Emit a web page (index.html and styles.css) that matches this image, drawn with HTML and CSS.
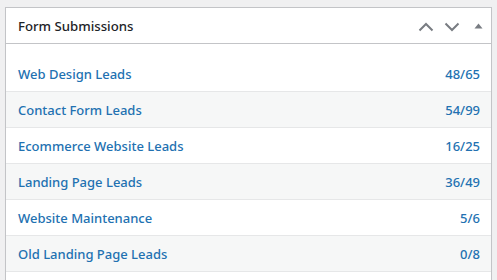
FILE: index.html
```html
<!DOCTYPE html>
<html>
<head>
<meta charset="utf-8">
<link rel="stylesheet" href="styles.css">
</head>
<body>
<div class="panel">
  <div class="header">
    <h2 class="title">Form Submissions</h2>
    <div class="actions">
      <svg class="chev" width="16" height="10" viewBox="0 0 16 10"><path d="M1.5 8.5 L8 2 L14.5 8.5" fill="none" stroke="#787c82" stroke-width="2"/></svg>
      <svg class="chev" width="16" height="10" viewBox="0 0 16 10"><path d="M1.5 1.5 L8 8 L14.5 1.5" fill="none" stroke="#787c82" stroke-width="2"/></svg>
      <svg class="tri" width="9" height="6" viewBox="0 0 9 6"><path d="M0.5 5.5 L4.5 0.5 L8.5 5.5 Z" fill="#787c82"/></svg>
    </div>
  </div>
  <ul class="list">
    <li class="row"><a class="name">Web Design Leads</a><a class="count">48/65</a></li>
    <li class="row alt"><a class="name">Contact Form Leads</a><a class="count">54/99</a></li>
    <li class="row"><a class="name">Ecommerce Website Leads</a><a class="count">16/25</a></li>
    <li class="row alt"><a class="name">Landing Page Leads</a><a class="count">36/49</a></li>
    <li class="row"><a class="name">Website Maintenance</a><a class="count">5/6</a></li>
    <li class="row alt"><a class="name">Old Landing Page Leads</a><a class="count">0/8</a></li>
  </ul>
</div>
</body>
</html>
```
FILE: styles.css
```css
html, body {
  margin: 0;
  padding: 0;
  background: #f0f0f1;
  font-family: "Noto Sans", "Open Sans", sans-serif;
  overflow: hidden;
}
body {
  padding: 7px 5px 0 5px;
}
.panel {
  background: #fff;
  border: 1px solid #c3c4c7;
  box-shadow: 0 1px 1px rgba(0,0,0,0.04);
}
.header {
  height: 35px;
  border-bottom: 1px solid #c3c4c7;
  display: flex;
  align-items: center;
  justify-content: space-between;
  padding: 0 8px 0 12px;
}
.title {
  margin: 0;
  font-size: 13.2px;
  font-weight: 500;
  color: #1d2327;
}
.actions {
  display: flex;
  align-items: center;
  gap: 0;
}
.chev {
  display: block;
  margin-right: 10px;
  margin-top: 2px;
}
.tri {
  display: block;
  margin-left: 4px;
  margin-top: 0px;
}
.list {
  list-style: none;
  margin: 0;
  padding: 12px 0 24px 0;
}
.row {
  height: 35px;
  border-bottom: 1px solid #e6e7e8;
  display: flex;
  align-items: center;
  justify-content: space-between;
  padding: 0 11px 0 12px;
  font-size: 13px;
  font-weight: 500;
}
.row.alt {
  background: #f6f7f7;
}
.name, .count {
  color: #2271b1;
  text-decoration: none;
}
```
